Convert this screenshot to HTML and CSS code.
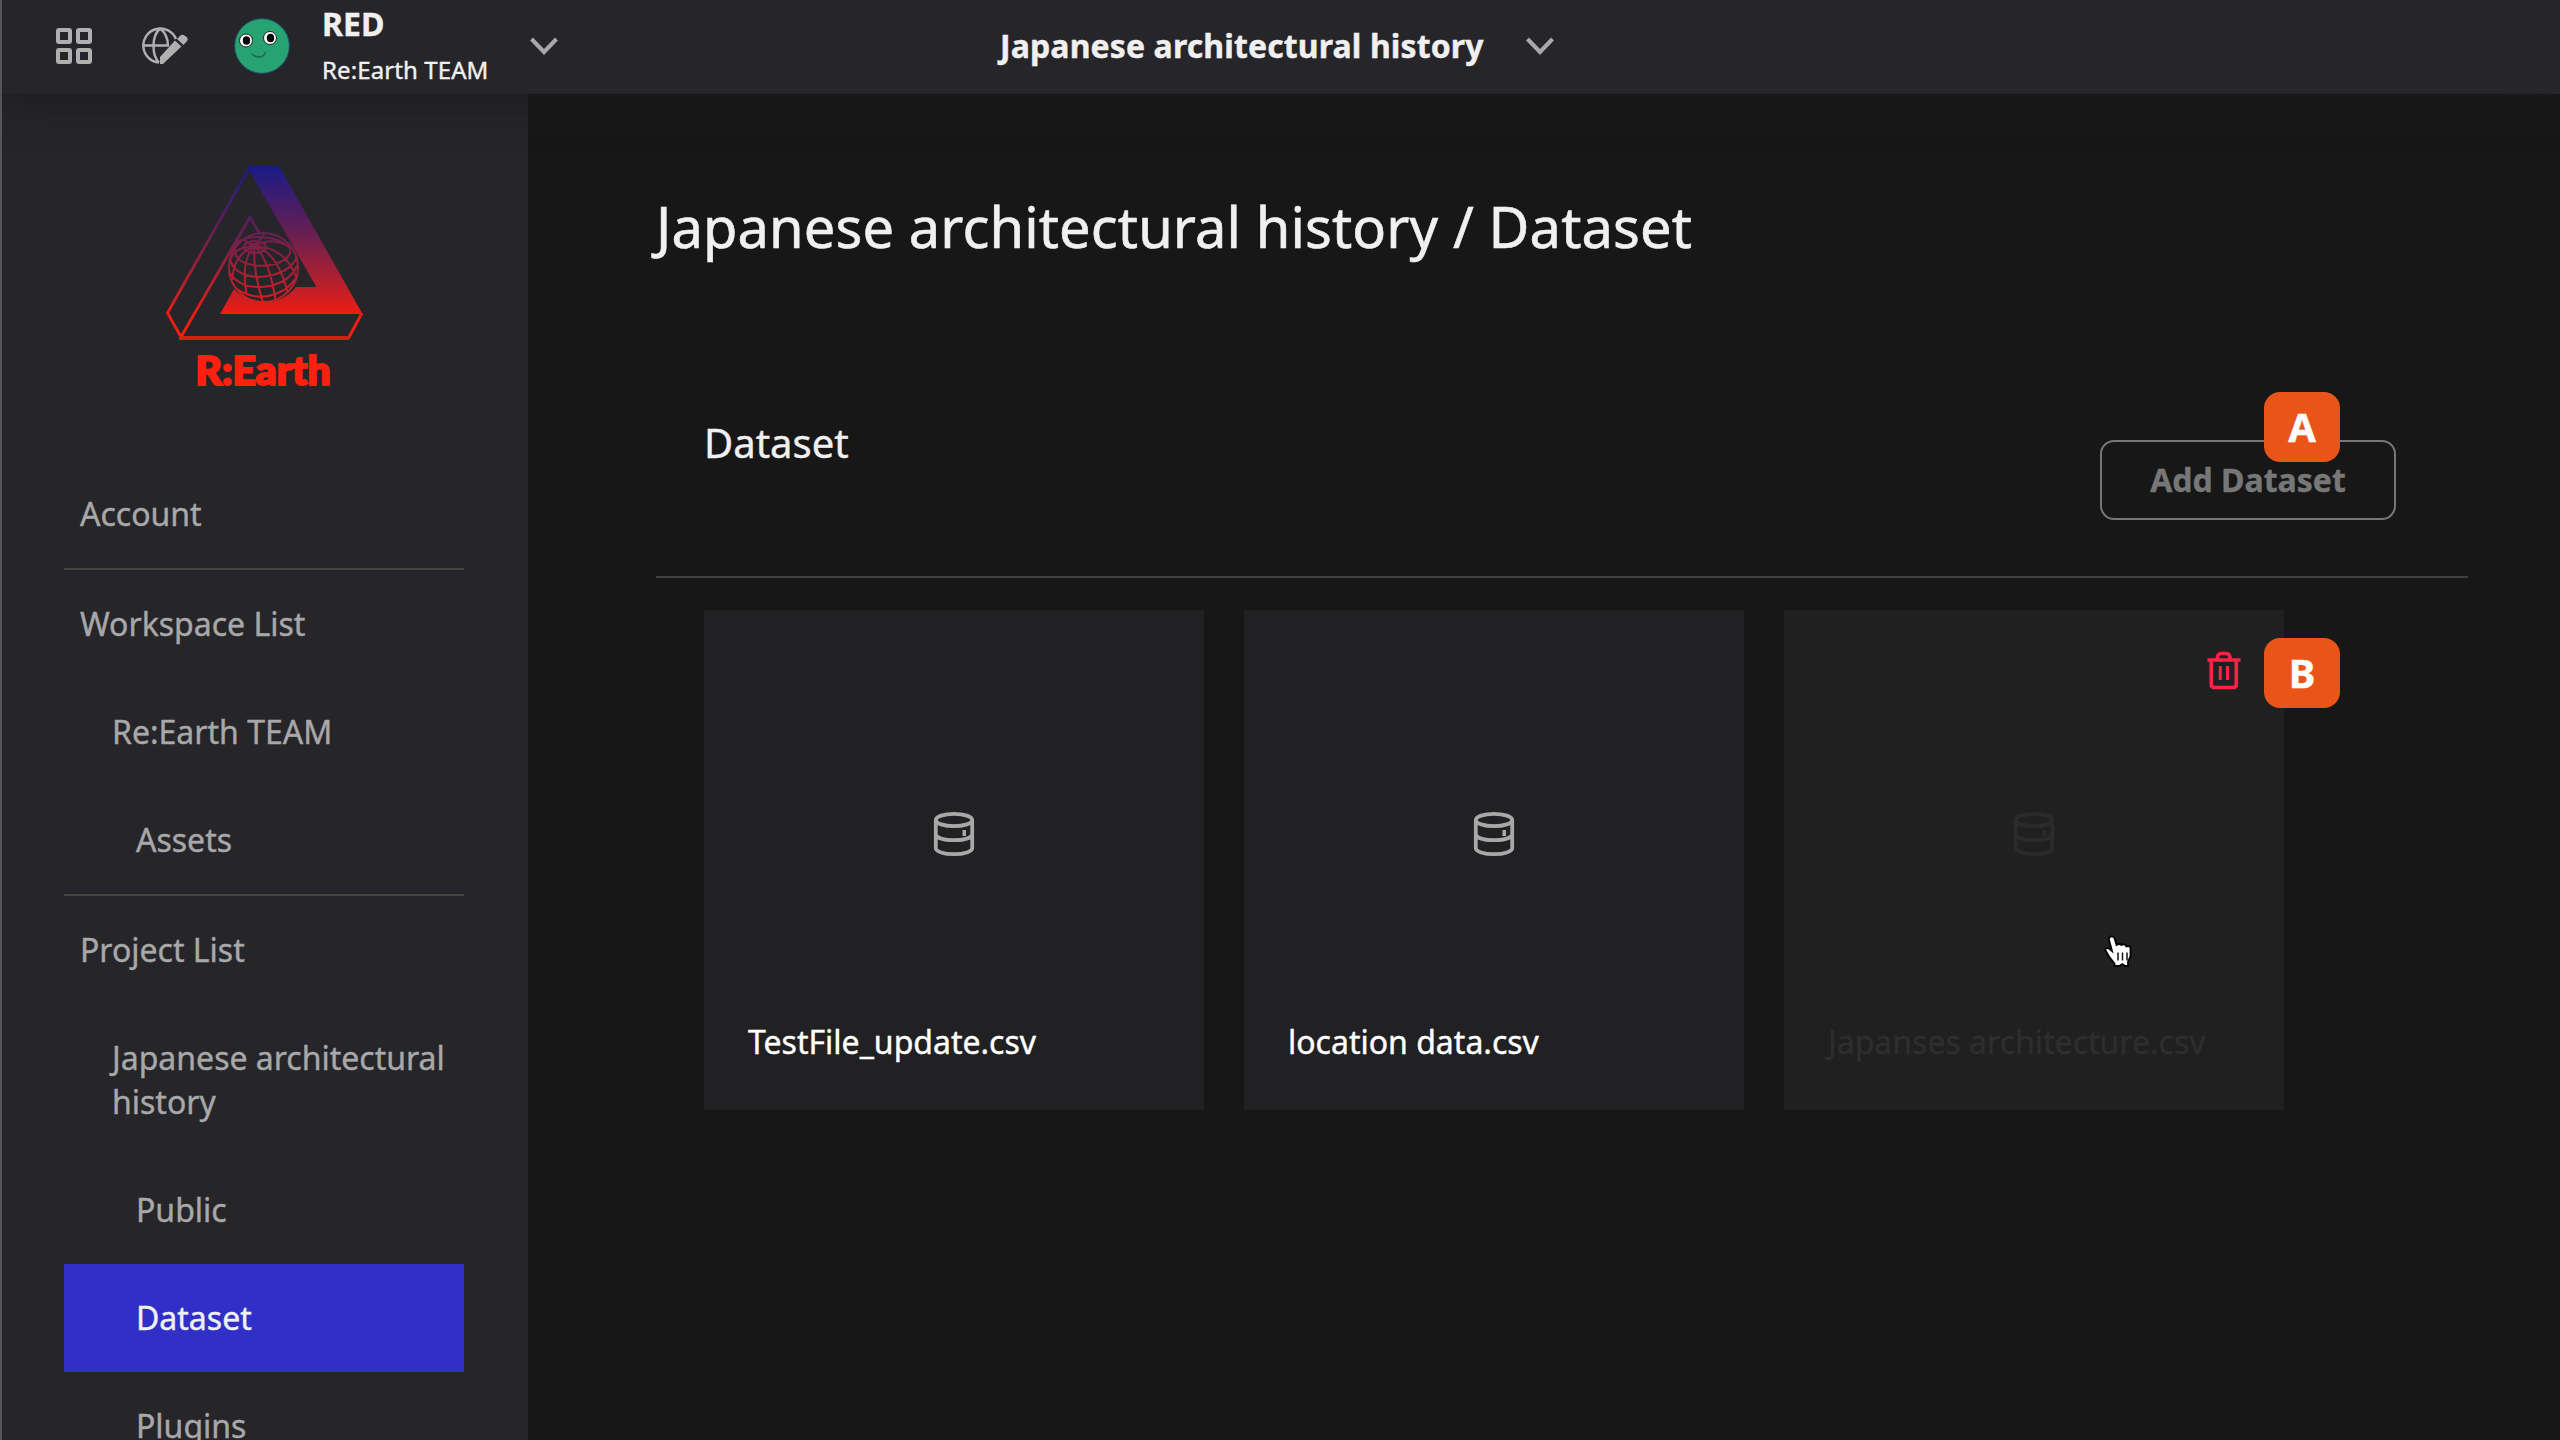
FILE: index.html
```html
<!DOCTYPE html>
<html lang="en">
<head>
<meta charset="utf-8">
<title>Dataset</title>
<link rel="stylesheet" href="styles.css">
</head>
<body>
<svg class="defs" width="0" height="0" aria-hidden="true">
  <symbol id="chevron" viewBox="0 0 28 18"><path d="M1.500 2 14 15 26.500 2" fill="none" stroke="#a8a8a8" stroke-width="4"/></symbol>
  <symbol id="database" viewBox="0 0 44 46"><g fill="none" stroke="currentColor" stroke-width="3.800"><ellipse cx="22" cy="9" rx="18.200" ry="6.200"/><path d="M3.800 9v28c0 3.600 8 6.200 18.200 6.200s18.200-2.600 18.200-6.200V9M3.800 23.500c1 3.800 9 5.700 18.200 5.700s17.200-1.900 18.200-5.700"/></g><path d="M30.500 19h3.500v6h-3.500z" fill="currentColor"/></symbol>
</svg>
<header class="topbar">
  <div class="tools">
    <svg class="grid-icon" viewBox="0 0 38 38"><g fill="none" stroke="#b0b0b0" stroke-width="4"><rect x="3" y="3" width="12" height="12" rx="1"/><rect x="23" y="3" width="12" height="12" rx="1"/><rect x="3" y="23" width="12" height="12" rx="1"/><rect x="23" y="23" width="12" height="12" rx="1"/></g></svg>
    <svg class="globe-icon" viewBox="0 0 48 40"><g fill="none" stroke="#b0b0b0" stroke-width="2.400"><path d="M34 13A17 17 0 1 0 17 36.500M17 36.500C9.500 29 9.500 10 18 2.500C24 7 26 13 26 20M1 19.500h26M16 2.500h4"/></g><path d="M18 38v-7l15-16.500 6.500 6L24 35l-3 3zM35 13l4-4q2-1 5 1.500t1 4.500l-3.500 4z" fill="#b0b0b0"/></svg>
    <svg class="avatar" viewBox="0 0 56 56"><circle cx="28" cy="28" r="27.300" fill="#27a271" stroke="#1e5573" stroke-width="1"/><circle cx="12" cy="22.500" r="6.500" fill="#fff" stroke="#222" stroke-width="1"/><circle cx="36" cy="20" r="6.500" fill="#fff" stroke="#222" stroke-width="1"/><ellipse cx="12.500" cy="22.500" rx="3.700" ry="4.300" fill="#080808"/><ellipse cx="36.500" cy="20" rx="3.700" ry="4.300" fill="#080808"/><path d="M18 35.500q2 3.500 7 3.500t6.500-5" fill="none" stroke="#19694e" stroke-width="1.400"/></svg>
  </div>
  <div class="account"><strong class="user">RED</strong><span class="team">Re:Earth TEAM</span></div>
  <svg class="chevron"><use href="#chevron"/></svg>
  <div class="project"><strong class="project-name">Japanese architectural history</strong><svg class="chevron"><use href="#chevron"/></svg></div>
</header>
<div class="layout">
  <nav class="sidebar">
    <svg class="logo" viewBox="0 0 200 226">
      <defs><linearGradient id="fade" gradientUnits="userSpaceOnUse" x1="0" y1="0" x2="0" y2="174"><stop offset="0" stop-color="#191b86"/><stop offset=".38" stop-color="#661f52"/><stop offset=".7" stop-color="#bd2029"/><stop offset=".85" stop-color="#ed1d13"/><stop offset="1" stop-color="#ff200f"/></linearGradient></defs>
      <path d="M84.500 0h30.500l83.500 148H56l14-25q9 10 26 13 22 2 36-15h20.500L86 6z" fill="url(#fade)"/>
      <g fill="none" stroke="url(#fade)" stroke-width="2.800"><path d="M85.500 1.500 3.500 147 17 171 86 51l9.500 17M184.500 172 198 147"/></g>
      <g fill="none" stroke="url(#fade)" stroke-width="2"><circle cx="99.500" cy="101.500" r="34.500"/><ellipse cx="90.500" cy="80" rx="4" ry="2" /><ellipse cx="91" cy="81" rx="11" ry="6"/><path d="M71 80q4-9 24-9t31 11q3 11-18 17-22 3-34-6-4-6-3-13M66 93q4 17 29 18 30-2 38-20M66 107q10 15 31 14 27-2 36-21M73 123q15 10 31 7 19-4 27-17M90.500 80q-22 9-22 34M90.500 80q-14 14-8 48M90.500 80q-2 22 8 55M90.500 80q14 12 21 53M90.500 80q23 6 33 46M90.500 80q31 1 42 32M90.500 80Q72 80 66 94M90.500 80Q110 69 128 83M90.500 80 80 74M90.500 80l10-12"/></g>
      <path d="M15 172h170" stroke="#d2220f" stroke-width="4"/>
      <text x="31.500" y="218.500" textLength="135" lengthAdjust="spacingAndGlyphs" class="logo-text">R:Earth</text>
    </svg>
    <ul class="menu">
      <li class="item">Account</li>
      <li class="item ruled">Workspace List</li>
      <li class="item child">Re:Earth TEAM</li>
      <li class="item grandchild">Assets</li>
      <li class="item ruled">Project List</li>
      <li class="item child">Japanese architectural history</li>
      <li class="item grandchild">Public</li>
      <li class="item grandchild active">Dataset</li>
      <li class="item grandchild">Plugins</li>
    </ul>
  </nav>
  <main class="content">
    <h1 class="title">Japanese architectural history / Dataset</h1>
    <section class="panel">
      <div class="panel-head">
        <h2 class="panel-title">Dataset</h2>
        <button class="add">Add Dataset<span class="marker marker-a">A</span></button>
      </div>
      <div class="cards">
        <article class="card"><svg class="db"><use href="#database"/></svg><span class="file">TestFile_update.csv</span></article>
        <article class="card"><svg class="db"><use href="#database"/></svg><span class="file">location data.csv</span></article>
        <article class="card hovered"><svg class="db"><use href="#database"/></svg><span class="file">Japanses architecture.csv</span>
          <svg class="trash" viewBox="0 0 34 40"><g fill="none" stroke="#ff2247"><path d="M4.300 9v24.500q0 3 3 3h19q3 0 3-3V9M10.200 8.500q0-6 4-6h5q4 0 4 6" stroke-width="3.600"/><path d="M.5 9h33" stroke-width="3.400"/><path d="M13.200 15v14M20.500 15v14" stroke-width="3"/></g></svg>
          <span class="marker marker-b">B</span>
          <svg class="pointer" viewBox="0 0 28 32"><path d="M7 1.500q-2.500.5-2 3.500l3 11-3-2.500q-3.500-1-3.800 1.500L5 21.500l5.500 7V31h4.500l3.500-2 2.500 2h3v-4l2.500-6v-8q-1-3-4-1.500-2-3.500-5-1.500-2.500-2-5 0L11 4.500q-1-3.500-4-3z" fill="#fff" stroke="#000" stroke-width="1.800"/><path d="M14 17.500v8M18.500 17.500v8M23 17.500v8" stroke="#111" stroke-width="1.500"/></svg>
        </article>
      </div>
    </section>
  </main>
</div>
</body>
</html>
```
FILE: styles.css
```css
* { box-sizing: border-box; }
body { margin: 0; width: 2560px; height: 1440px; overflow: hidden; display: flex; flex-direction: column; background: #171717; border-left: 2px solid #555558; color: #f0f0f0; font-family: "Noto Sans", sans-serif; -webkit-text-stroke: .4px currentColor; }
.defs { position: absolute; }
.topbar { position: relative; z-index: 1; height: 94px; flex: none; display: flex; align-items: center; padding: 0 0 2px 53px; background: #26252a; box-shadow: 0 2px 48px #1a1a1a; }
.tools { display: flex; align-items: center; }
.grid-icon { width: 38px; height: 38px; }
.globe-icon { width: 48px; height: 40px; margin-left: 49px; }
.avatar { width: 56px; height: 56px; margin-left: 44px; }
.account { width: 166px; margin-left: 32px; display: flex; flex-direction: column; gap: 2px; }
.user { font-size: 32px; line-height: 46px; }
.team { font-size: 24px; line-height: 42px; letter-spacing: .1px; white-space: nowrap; }
.chevron { width: 28px; height: 18px; flex: none; }
.account + .chevron { margin-left: 42px; }
.project { display: flex; align-items: center; margin-left: 442px; }
.project-name { font-size: 32px; line-height: 44px; width: 486px; letter-spacing: .12px; white-space: nowrap; }
.project .chevron { margin-left: 40px; }
.layout { flex: 1; min-height: 0; display: flex; }
.sidebar { width: 526px; flex: none; padding: 72px 64px 0 62px; background: #26252a; }
.logo { display: block; width: 200px; height: 226px; margin: 0 auto; overflow: visible; }
.logo-text { font: 900 40px "Lato", sans-serif; fill: #ff200f; stroke: #ff200f; stroke-width: 2px; }
.menu { list-style: none; margin: 68px 0 0; padding: 0; }
.item { padding: 32px 16px; font-size: 32px; line-height: 44px; color: #a8a8a8; }
.ruled { border-top: 2px solid #464542; }
.child { padding-left: 48px; padding-right: 0; }
.grandchild { padding-left: 72px; }
.active { background: #302fc8; color: #f0f0f0; }
.content { flex: 1; padding: 94px 92px 0 128px; }
.title { margin: 0; font-size: 56px; line-height: 76px; font-weight: 400; letter-spacing: .12px; -webkit-text-stroke-width: .6px; }
.panel { padding-top: 145px; }
.panel-head { height: 169px; border-bottom: 2px solid #404040; padding: 0 72px 0 48px; display: flex; justify-content: space-between; }
.panel-title { margin: 6px 0 0; font-size: 40px; line-height: 56px; font-weight: 400; }
.add { position: relative; margin: 31px 0 0; width: 296px; height: 80px; border: 2px solid #777; border-radius: 14px; background: none; color: #777; font: 700 32px "Noto Sans", sans-serif; padding: 0 0 2px; }
.marker { position: absolute; width: 76px; height: 70px; border-radius: 16px; background: #e95518; color: #fff; font: 700 40px/69px "Noto Sans", sans-serif; text-align: center; }
.marker-a { left: 162px; top: -50px; }
.marker-b { left: 480px; top: 28px; }
.cards { display: flex; gap: 40px; padding: 32px 0 0 48px; }
.card { position: relative; width: 500px; height: 500px; background: #212123; color: #fff; display: flex; flex-direction: column; align-items: center; }
.db { width: 44px; height: 46px; margin-top: 201px; color: #a8a8a8; }
.file { align-self: flex-start; margin: 163px 0 0 44px; font-size: 32px; line-height: 44px; white-space: nowrap; }
.hovered { background: #202020; color: #2e2e2e; }
.hovered .db { color: #2b2b2b; }
.trash { position: absolute; left: 423px; top: 41px; width: 34px; height: 40px; }
.pointer { position: absolute; left: 320px; top: 325px; width: 28px; height: 32px; }
```
